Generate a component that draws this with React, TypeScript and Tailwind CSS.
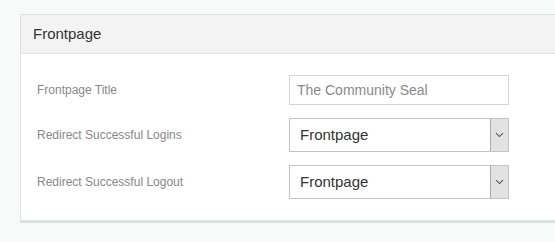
import React from "react";

const font = { fontFamily: '"Liberation Sans", Arial, sans-serif' };

function Chevron() {
  return (
    <svg width="9" height="6" viewBox="0 0 9 6" fill="none">
      <path d="M1 1.2 L4.5 4.6 L8 1.2" stroke="#555" strokeWidth="1.1" />
    </svg>
  );
}

function SelectBox({ value }: { value: string }) {
  return (
    <div className="flex h-[34px] w-[220px] border border-[#c4c4c4] bg-white">
      <div className="flex flex-1 items-center pl-[10px] text-[15px] text-[#333]">{value}</div>
      <div className="flex w-[18px] items-center justify-center border-l border-[#aaa] bg-[#e2e2e2]">
        <Chevron />
      </div>
    </div>
  );
}

export default function App() {
  return (
    <div className="h-[242px] w-[555px] overflow-hidden bg-[#f8f9f9] pl-[20px] pt-[14px]" style={font}>
      <div className="w-[600px] border-x border-t border-b-[3px] border-[#dce3e3] border-b-[#d9e1e1] bg-white">
        <div className="flex h-[39px] items-center border-b border-[#dfe4e4] bg-[#f3f3f3] pl-[12px] text-[15px] text-[#333]">
          Frontpage
        </div>
        <div className="flex flex-col gap-[13px] pb-[21px] pl-[16px] pt-[21px]">
          <div className="flex items-center">
            <div className="w-[252px] text-[12px] text-[#888]">Frontpage Title</div>
            <div className="flex h-[30px] w-[220px] items-center border border-[#d4d4d4] bg-white pl-[7px] text-[14px] text-[#8a8a8a]">
              The Community Seal
            </div>
          </div>
          <div className="flex items-center">
            <div className="w-[252px] text-[12px] text-[#888]">Redirect Successful Logins</div>
            <SelectBox value="Frontpage" />
          </div>
          <div className="flex items-center">
            <div className="w-[252px] text-[12px] text-[#888]">Redirect Successful Logout</div>
            <SelectBox value="Frontpage" />
          </div>
        </div>
      </div>
    </div>
  );
}
